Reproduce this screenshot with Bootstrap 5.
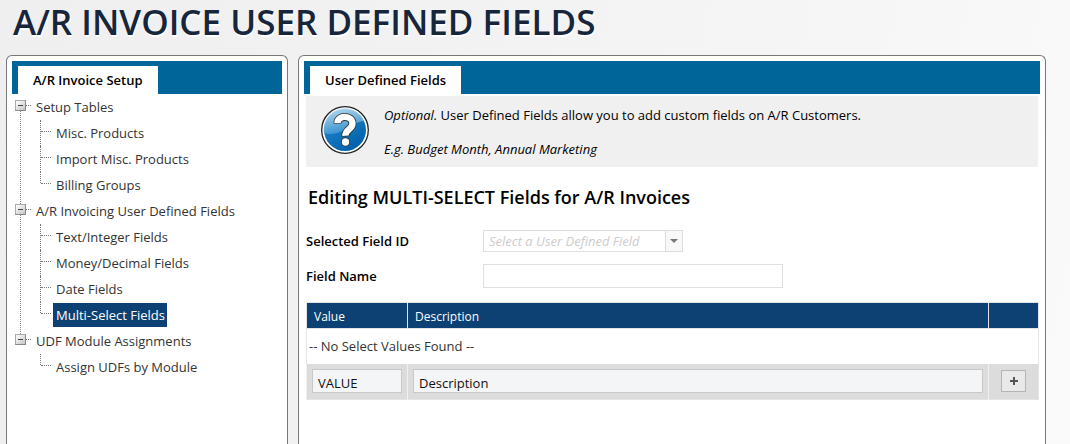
<!DOCTYPE html>
<html lang="en">
<head>
<meta charset="utf-8">
<meta name="viewport" content="width=device-width, initial-scale=1">
<title>A/R Invoice User Defined Fields</title>
<link href="https://cdn.jsdelivr.net/npm/bootstrap@5.3.0/dist/css/bootstrap.min.css" rel="stylesheet">
<style>
  :root { --ui-font: "Open Sans", "Noto Sans", sans-serif; --navy: #0d4173; --blue: #006699; --line: #e4e4e4; }
  body { font-family: var(--ui-font); font-size: 13px; line-height: 17px; color: #000; background: linear-gradient(100deg, #efefef 0%, #f2f2f2 40%, #f6f6f6 75%, #fafafa 100%); }
  .page { min-height: 100vh; padding: 0 24px 0 6px; }
  .page-title { font-size: 35px; line-height: 42px; font-weight: 600; color: #17263a; text-shadow: 1px 2px 1px #fff; padding: 1px 0 0 7px; margin: 0 0 12px; }
  .columns { gap: 10px; }
  .panel { background: #fff; border: 1px solid #777; border-bottom: 0; border-radius: 6px 6px 0 0; padding: 5px; }
  .side { flex: 0 0 282px; }
  .tabs { background: var(--blue); padding: 5px 6px 0; }
  .tabs .nav-link { background: #fff; color: #000; font-weight: 600; line-height: 28px; padding: 0 15px; border-radius: 0; }

  .tree, .tree ul { list-style: none; margin: 0; padding: 0; }
  .tree { margin-left: 3px; color: #333; }
  .tree a { color: inherit; text-decoration: none; }
  .branch { position: relative; }
  .branch-row { display: flex; align-items: center; height: 26px; }
  .branch-row a { padding-left: 5px; }
  .branch:not(:last-child)::before { content: ""; position: absolute; left: 5px; top: 17px; bottom: -6px; border-left: 1px dotted #888; }
  .fold { position: relative; width: 11px; height: 11px; margin-bottom: 4px; padding: 0; border: 1px solid #aaa; border-right-color: #888; border-bottom-color: #888; background: linear-gradient(135deg, #fff, #c4c4c4); }
  .fold::before { content: ""; position: absolute; left: 2px; top: 4px; width: 5px; height: 1px; background: #444; }
  .stub { width: 5px; margin-bottom: 4px; border-top: 1px dotted #777; }
  .tree .leaves { padding-left: 25px; }
  .leaf { position: relative; height: 26px; display: flex; align-items: center; padding-left: 13px; }
  .leaf::before { content: ""; position: absolute; left: 0; top: 0; bottom: 0; border-left: 1px dotted #777; }
  .leaf:last-child::before { bottom: 15px; }
  .leaf::after { content: ""; position: absolute; left: 1px; top: 11px; width: 10px; border-top: 1px dotted #777; }
  .leaf a { padding: 0 2px 0 3px; line-height: 24px; }
  .leaf a.active { background: var(--navy); color: #fff; }

  .content { margin: 2px 1px 0 2px; }
  .hint { background: #f0f0f0; margin-right: 1px; padding: 10px 14px 8px; gap: 14px; min-height: 71px; }
  .hint-text { padding-top: 1px; }
  .hint p { margin: 0 0 17px; }
  .hint p:last-child { margin: 0; }
  .section-title { font-size: 18px; line-height: 24px; font-weight: 600; margin: 18px 0 21px 2px; }
  .field-row + .field-row { margin-top: 12px; }
  .field-label { width: 177px; font-weight: 600; }
  .combo { width: 200px; height: 22px; border: 1px solid #ddd; }
  .combo select { width: 100%; height: 20px; appearance: none; border: 0; border-radius: 0; background: #fff; color: #ccc; font-style: italic; padding: 1px 5px 0; outline-offset: 0; }
  .combo-arrow { flex: 0 0 17px; height: 20px; background: #f8f8f8; border-left: 1px solid #ddd; }
  .box { height: 24px; border: 1px solid #e0e0e0; border-radius: 0; padding: 0 5px; background: #fff; color: #000; }
  .name-box { width: 300px; }

  .grid { width: 100%; table-layout: fixed; border-collapse: collapse; border: 1px solid var(--line); margin-top: 14px; }
  .grid th { background: var(--navy); color: #fff; font-size: 12px; font-weight: 400; height: 26px; padding: 2px 7px 0; border: 1px solid var(--line); }
  .grid .empty { height: 35px; padding: 0 2px; color: #333; }
  .grid tfoot td { background: #dcdcdc; height: 36px; padding: 0 5px; border-left: 1px solid #f0f0f0; }
  .grid .box { width: 100%; display: block; padding-top: 3px; background: #f4f5f7; border-color: #c8c8c8; color: #111; }
  .grid .box::placeholder { color: #111; opacity: 1; }
  .col-value { width: 101px; }
  .col-action { width: 50px; }
  .add { width: 25px; height: 22px; padding: 0; border: 1px solid #b4b4b4; background: #e9e9e9; }
</style>
</head>
<body>
<main class="page d-flex flex-column">
  <h1 class="page-title">A/R INVOICE USER DEFINED FIELDS</h1>
  <div class="columns d-flex flex-grow-1">
    <aside class="panel side">
      <nav class="nav tabs"><a class="nav-link" href="#">A/R Invoice Setup</a></nav>
      <ul class="tree">
        <li class="branch">
          <div class="branch-row"><button class="fold" aria-label="Collapse Setup Tables"></button><span class="stub"></span><a href="#">Setup Tables</a></div>
          <ul class="leaves">
            <li class="leaf"><a href="#">Misc. Products</a></li>
            <li class="leaf"><a href="#">Import Misc. Products</a></li>
            <li class="leaf"><a href="#">Billing Groups</a></li>
          </ul>
        </li>
        <li class="branch">
          <div class="branch-row"><button class="fold" aria-label="Collapse User Defined Fields"></button><span class="stub"></span><a href="#">A/R Invoicing User Defined Fields</a></div>
          <ul class="leaves">
            <li class="leaf"><a href="#">Text/Integer Fields</a></li>
            <li class="leaf"><a href="#">Money/Decimal Fields</a></li>
            <li class="leaf"><a href="#">Date Fields</a></li>
            <li class="leaf"><a class="active" href="#" aria-current="page">Multi-Select Fields</a></li>
          </ul>
        </li>
        <li class="branch">
          <div class="branch-row"><button class="fold" aria-label="Collapse Module Assignments"></button><span class="stub"></span><a href="#">UDF Module Assignments</a></div>
          <ul class="leaves">
            <li class="leaf"><a href="#">Assign UDFs by Module</a></li>
          </ul>
        </li>
      </ul>
    </aside>

    <section class="panel flex-grow-1">
      <nav class="nav tabs"><a class="nav-link" href="#">User Defined Fields</a></nav>
      <div class="content">
        <div class="hint d-flex">
          <svg class="flex-shrink-0" width="50" height="50" viewBox="0 0 50 50" aria-hidden="true">
            <defs>
              <linearGradient id="ball" x1="0" y1="0" x2="0.6" y2="1"><stop offset="0" stop-color="#2f8fcf"/><stop offset="1" stop-color="#0062ad"/></linearGradient>
              <linearGradient id="gloss" x1="0" y1="0" x2="0.3" y2="1"><stop offset="0" stop-color="#e2f0f9"/><stop offset="1" stop-color="#3f9bd5"/></linearGradient>
            </defs>
            <circle cx="25" cy="24" r="23.3" fill="#fff" stroke="#222" stroke-width="1.3"/>
            <circle cx="25" cy="24" r="21" fill="url(#ball)"/>
            <path d="M4 27A21 21 0 0 1 44 15C36 16 27 21 22 25C16 28 10 29 4 27Z" fill="url(#gloss)" opacity=".8"/>
            <path d="M17.500 17.500C17.500 8.500 32.500 9 32.500 17.500C32.500 23.500 25 23 25.500 30.500" fill="none" stroke="#333" stroke-width="8"/>
            <circle cx="25.500" cy="36" r="4.500" fill="#333"/>
            <path d="M17.500 17C17.500 8.500 32.500 9 32.500 17.500C32.500 23.500 25 23 25.500 29.800" fill="none" stroke="#fff" stroke-width="6.400"/>
            <circle cx="25.500" cy="36" r="3.700" fill="#fff"/>
          </svg>
          <div class="hint-text">
            <p><em>Optional.</em> User Defined Fields allow you to add custom fields on A/R Customers.</p>
            <p><em>E.g. Budget Month, Annual Marketing</em></p>
          </div>
        </div>
        <h2 class="section-title">Editing MULTI-SELECT Fields for A/R Invoices</h2>
        <div class="field-row d-flex align-items-center">
          <label class="field-label" for="fieldId">Selected Field ID</label>
          <div class="combo d-flex align-items-center">
            <select id="fieldId"><option>Select a User Defined Field</option></select>
            <span class="combo-arrow d-flex align-items-center justify-content-center"><svg width="8" height="4" viewBox="0 0 8 4" aria-hidden="true"><path d="M0 0H8L4 4Z" fill="#777"/></svg></span>
          </div>
        </div>
        <div class="field-row d-flex align-items-center">
          <label class="field-label" for="fieldName">Field Name</label>
          <input class="box name-box" id="fieldName" type="text">
        </div>
        <table class="grid">
          <colgroup><col class="col-value"><col><col class="col-action"></colgroup>
          <thead><tr><th scope="col">Value</th><th scope="col">Description</th><th scope="col" aria-label="Actions"></th></tr></thead>
          <tbody><tr><td class="empty" colspan="3">-- No Select Values Found --</td></tr></tbody>
          <tfoot><tr>
            <td><input class="box" type="text" placeholder="VALUE" aria-label="Value"></td>
            <td><input class="box" type="text" placeholder="Description" aria-label="Description"></td>
            <td class="text-center"><button class="add d-inline-flex align-items-center justify-content-center" aria-label="Add value"><svg width="8" height="8" viewBox="0 0 8 8"><path d="M3 0H5V3H8V5H5V8H3V5H0V3H3Z" fill="#555"/></svg></button></td>
          </tr></tfoot>
        </table>
      </div>
    </section>
  </div>
</main>
<script src="https://cdn.jsdelivr.net/npm/bootstrap@5.3.0/dist/js/bootstrap.bundle.min.js"></script>
</body>
</html>
